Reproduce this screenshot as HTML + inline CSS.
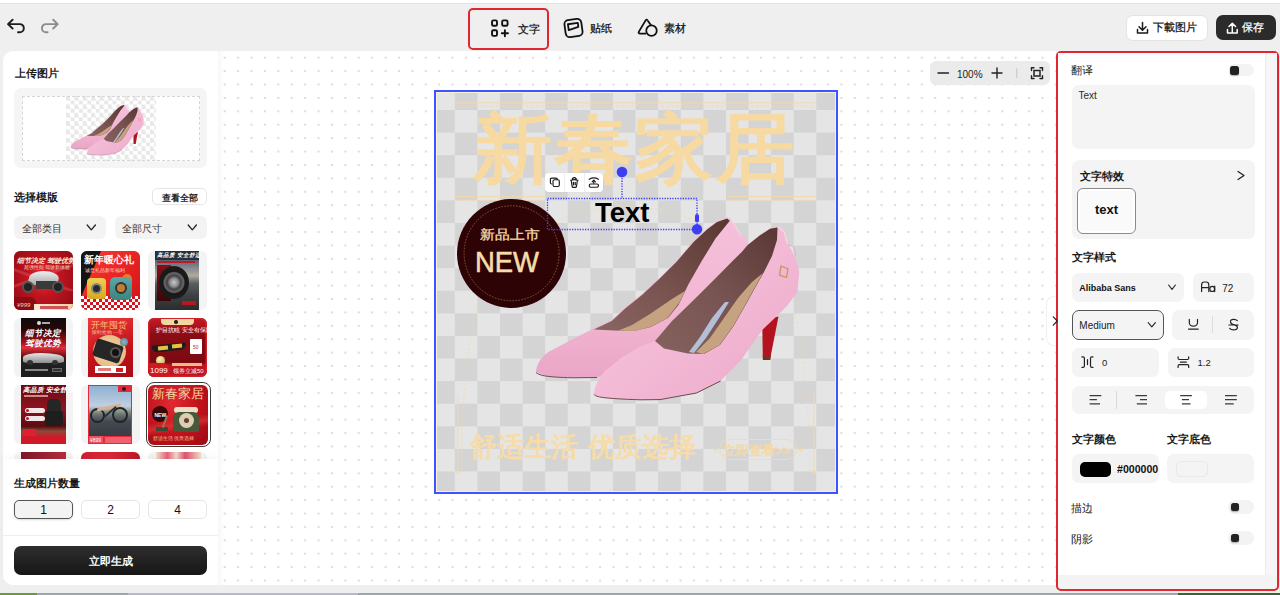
<!DOCTYPE html>
<html><head><meta charset="utf-8">
<style>
*{box-sizing:border-box;margin:0;padding:0}
html,body{width:1280px;height:595px;overflow:hidden;background:#efefef;font-family:"Liberation Sans",sans-serif;color:#222}
.a{position:absolute}
.t{position:absolute;white-space:nowrap;line-height:1}
svg{position:absolute;overflow:visible}
</style></head><body>
<!-- top strip -->
<div class="a" style="left:0;top:0;width:1280px;height:4px;background:#fff;border-bottom:1px solid #e4e4e4"></div>
<div class="a" style="left:0;top:5px;width:1280px;height:46px;background:#efefef"></div>

<!-- undo / redo -->
<svg style="left:0;top:0" width="80" height="50">
 <path d="M12.6 19.7 L8 24.1 L12.6 28.5 M8.4 24.1 H19.8 a4.05 4.05 0 0 1 0 8.1 H18" fill="none" stroke="#1e1e1e" stroke-width="1.9" stroke-linecap="round" stroke-linejoin="round"/>
 <path d="M53.2 19.7 L57.7 24.1 L53.2 28.5 M57.3 24.1 H46 a4.05 4.05 0 0 0 0 8.1 H47.6" fill="none" stroke="#8c8c8c" stroke-width="1.9" stroke-linecap="round" stroke-linejoin="round"/>
</svg>

<!-- center tools -->
<div class="a" style="left:468px;top:8px;width:81px;height:42px;border:2px solid #e0262f;border-radius:5px"></div>
<svg style="left:0;top:0" width="700" height="50">
 <g fill="none" stroke="#111" stroke-width="1.8" stroke-linejoin="round">
  <rect x="492.05" y="20.35" width="4.95" height="5.4" rx="1.3" stroke-width="1.9"/>
  <rect x="502.15" y="20.35" width="5.4" height="5.4" rx="1.3" stroke-width="1.9"/>
  <rect x="492.05" y="30.25" width="4.95" height="5.6" rx="1.3" stroke-width="1.9"/>
  <path d="M501.8 33.2 H508 M504.9 30.2 V36.3" stroke-linecap="round" stroke-width="1.9"/>
 </g>
 <g fill="none" stroke="#111" stroke-width="1.8" stroke-linejoin="round" transform="rotate(-8 573.5 28)">
  <rect x="565" y="19.5" width="17" height="17" rx="4"/>
  <path d="M568.5 23.5 L578.5 23.5 L578.5 27.5 L568.5 29.5 Z"/>
 </g>
 <g fill="none" stroke="#111" stroke-width="1.8" stroke-linejoin="round">
  <path d="M647.6 20.4 Q646.6 18.9 645.6 20.4 L638.9 31.6 Q637.9 33.6 640.2 33.6 L646 33.6" stroke-width="1.8"/>
  <path d="M647.6 20.4 L651.2 25.6" stroke-width="1.8"/>
  <circle cx="651.5" cy="30.7" r="5.25" fill="#efefef" stroke-width="1.8"/>
 </g>
</svg>
<div class="t" style="left:517.5px;top:24.0px;font-size:11px;color:#111;-webkit-text-stroke:0.25px #111">文字</div>
<div class="t" style="left:589.5px;top:23.0px;font-size:11px;color:#111;-webkit-text-stroke:0.25px #111">贴纸</div>
<div class="t" style="left:663.5px;top:23.0px;font-size:11px;color:#111;-webkit-text-stroke:0.25px #111">素材</div>

<!-- right buttons -->
<div class="a" style="left:1126px;top:15px;width:82px;height:26px;background:#fff;border:1px solid #e3e3e3;border-radius:7px"></div>
<svg style="left:0;top:0" width="1280" height="50">
 <path d="M1142.5 22.5 V30 M1139 26.8 L1142.5 30.3 L1146 26.8 M1137.5 29.5 V33 H1147.5 V29.5" fill="none" stroke="#1a1a1a" stroke-width="1.5" stroke-linecap="round" stroke-linejoin="round"/>
</svg>
<div class="t" style="left:1152.5px;top:22.0px;font-size:11px;color:#111;-webkit-text-stroke:0.25px #111">下載图片</div>
<div class="a" style="left:1216px;top:15px;width:60px;height:25px;background:#2b2b2b;border-radius:7px"></div>
<svg style="left:0;top:0" width="1280" height="50">
 <path d="M1232.3 32 V23.5 M1229 26.5 L1232.3 23.2 L1235.6 26.5 M1227.5 29.5 V33 H1237.2 V29.5" fill="none" stroke="#fff" stroke-width="1.5" stroke-linecap="round" stroke-linejoin="round"/>
</svg>
<div class="t" style="left:1242.0px;top:21.5px;font-size:11px;color:#fff;-webkit-text-stroke:0.25px #fff">保存</div>

<!-- LEFT PANEL -->
<div id="left" class="a" style="left:3px;top:51px;width:215px;height:534px;background:#fff;border-radius:10px 0 0 10px"></div>


<!-- LEFT PANEL CONTENT -->
<div class="t" style="left:14.5px;top:68.0px;font-size:11px;font-weight:bold;color:#1a1a1a">上传图片</div>
<div class="a" style="left:14px;top:88px;width:193px;height:80px;background:#f5f5f5;border-radius:7px"></div>
<div class="a" style="left:22px;top:96px;width:178px;height:65px;background:#fff"></div>
<div class="a" style="left:65.7px;top:96px;width:90px;height:64.6px;background-color:#fff;background-image:repeating-conic-gradient(#fff 0 25%,#e8e8e8 0 50%);background-size:8.4px 8.4px;background-position:0 0"></div>
<svg style="left:0;top:0" width="220" height="200"><use href="#shoeg" transform="translate(-77.7 44.4) scale(0.277)"/></svg>
<div class="a" style="left:22px;top:96px;width:178px;height:65px;border:1px dashed #d6d6d6"></div>
<div class="t" style="left:14.0px;top:192.0px;font-size:11px;font-weight:bold;color:#1a1a1a">选择模版</div>
<div class="a" style="left:152px;top:188px;width:55px;height:17px;background:#fff;border:1px solid #e6e6e6;border-radius:5px"></div>
<div class="t" style="left:162.0px;top:193.9px;font-size:9px;font-weight:bold;color:#222">查看全部</div>
<div class="a" style="left:14px;top:216px;width:92px;height:23px;background:#f3f3f3;border-radius:6px"></div>
<div class="t" style="left:21.5px;top:224.0px;font-size:10px;color:#333">全部类目</div>
<div class="a" style="left:115px;top:216px;width:92px;height:23px;background:#f3f3f3;border-radius:6px"></div>
<div class="t" style="left:121.7px;top:224.0px;font-size:10px;color:#333">全部尺寸</div>
<svg style="left:0;top:0" width="220" height="260"><path d="M87.2 225 L91.3 229.8 L95.4 225 M188.2 225 L192.3 229.8 L196.4 225" fill="none" stroke="#222" stroke-width="1.3" stroke-linecap="round" stroke-linejoin="round"/></svg>


<!-- TEMPLATE GRID -->
<div class="a" style="left:3px;top:245px;width:215px;height:220px;overflow:hidden">
 <!-- row1 -->
 <div class="a" style="left:11px;top:6px;width:59px;height:59px;border-radius:6px;overflow:hidden;background:radial-gradient(ellipse at 50% 45%,#e8303a 0%,#c01420 40%,#8a0a14 100%)">
  <div class="a" style="left:0;top:14px;width:59px;height:26px;background:linear-gradient(160deg,transparent 40%,rgba(255,120,120,.35) 45%,transparent 50%),linear-gradient(20deg,transparent 40%,rgba(255,120,120,.35) 45%,transparent 50%)"></div>
  <div class="t" style="left:3px;top:6px;font-size:7px;font-weight:bold;font-style:italic;color:#f8e6d8">细节决定 驾驶优势</div>
  <div class="t" style="left:10px;top:14px;font-size:5px;color:#f4d8b0">超强性能 驾驶新体验</div>
  <div class="a" style="left:15px;top:20px;width:30px;height:14px;border-radius:40% 60% 20% 30%;background:linear-gradient(#f0f0f0,#a8a8a8);transform:skewX(-15deg)"></div>
  <div class="a" style="left:22px;top:30px;width:20px;height:8px;background:#3a3a3a"></div>
  <div class="a" style="left:8px;top:30px;width:12px;height:12px;border-radius:50%;background:#222;border:2px solid #555"></div>
  <div class="a" style="left:38px;top:30px;width:12px;height:12px;border-radius:50%;background:#222;border:2px solid #555"></div>
  <div class="a" style="left:0;top:46px;width:22px;height:13px;background:#8c0a12;border-radius:0 6px 0 0"></div>
  <div class="t" style="left:3px;top:51px;font-size:6px;font-style:italic;color:#f0d0c0">¥999</div>
  <div class="a" style="left:20px;top:53px;width:39px;height:6px;background:linear-gradient(90deg,#f8e8d0,#f0d0a8)"></div>
  <div class="a" style="left:26px;top:54.5px;width:28px;height:3px;background:#c01828;opacity:.7"></div>
 </div>
 <div class="a" style="left:78px;top:6px;width:59px;height:59px;border-radius:6px;overflow:hidden;background:linear-gradient(135deg,#ff3a30,#d01018)">
  <div class="a" style="left:0;top:0;width:0;height:0;border-top:46px solid #151515;border-right:20px solid transparent"></div>
  <div class="t" style="left:3px;top:4px;font-size:10px;font-weight:bold;color:#fff">新年暖心礼</div>
  <div class="t" style="left:4px;top:17px;font-size:5px;color:#ffd8d0">诚意礼品新年福利</div>
  <div class="a" style="left:41px;top:23px;width:10px;height:10px;border-radius:50%;background:#f0a030;opacity:.7"></div>
  <div class="a" style="left:0;top:45px;width:59px;height:14px;background-color:#fff;background-image:repeating-conic-gradient(#d41520 0 25%,#fff 0 50%);background-size:6px 6px"></div>
  <div class="a" style="left:6px;top:27px;width:19px;height:21px;background:linear-gradient(#f0d050,#d8a820);border-radius:4px"></div>
  <div class="a" style="left:10px;top:32px;width:11px;height:11px;background:#2a2a2a;border:2px solid #888;border-radius:50%"></div>
  <div class="a" style="left:29px;top:26px;width:22px;height:23px;background:linear-gradient(#5aa8a4,#3c8480);border-radius:5px"></div>
  <div class="a" style="left:34px;top:31px;width:12px;height:12px;background:#c08030;border-radius:50%;border:2.5px solid #333"></div>
 </div>
 <div class="a" style="left:145px;top:6px;width:59px;height:59px;border-radius:6px;background:#f3f3f3;overflow:hidden">
  <div class="a" style="left:7px;top:0;width:44px;height:59px;background:linear-gradient(#2a3444 0%,#8a8e94 30%,#b0a89c 42%,#5a5e62 55%,#3e4044 75%,#2c2c2e 100%)">
   <div class="a" style="left:0;top:0;width:44px;height:9px;background:#24303e"></div>
   <div class="t" style="left:2px;top:2px;font-size:5.5px;font-weight:bold;font-style:italic;color:#fff">高品质 安全舒适</div>
   <div class="a" style="left:2px;top:10px;width:38px;height:1.5px;background:#c01828"></div>
   <div class="a" style="left:2px;top:14px;width:14px;height:36px;background:linear-gradient(#8a0c16,#3a0608)"></div>
   <div class="a" style="left:4px;top:15px;width:30px;height:33px;border-radius:50%;background:radial-gradient(circle,#c8c8c8 0%,#888 20%,#444 30%,#666 44%,#181818 50%,#222 100%)"></div>
   <div class="a" style="left:27px;top:50px;width:14px;height:4px;background:#b51820"></div>
  </div>
 </div>
 <!-- row2 -->
 <div class="a" style="left:11px;top:73px;width:59px;height:59px;border-radius:6px;background:#f3f3f3;overflow:hidden">
  <div class="a" style="left:7px;top:0;width:45px;height:59px;background:linear-gradient(#0c0c0c 0%,#2a0608 20%,#a8101a 42%,#e0303a 50%,#6a0a10 66%,#222 70%,#1c1c1c 100%)">
   <div class="a" style="left:16px;top:3px;width:4px;height:4px;border-radius:50%;background:#ddd"></div>
   <div class="a" style="left:21px;top:4px;width:8px;height:2px;background:#aaa"></div>
   <div class="t" style="left:4px;top:11px;font-size:8.5px;font-weight:bold;font-style:italic;color:#fff">细节决定</div>
   <div class="t" style="left:4px;top:21px;font-size:8.5px;font-weight:bold;font-style:italic;color:#fff">驾驶优势</div>
   <div class="a" style="left:2px;top:35px;width:41px;height:10px;border-radius:45% 55% 15% 15%;background:linear-gradient(#e8e8e8,#8c8c8c)"></div>
   <div class="a" style="left:6px;top:42px;width:6px;height:5px;border-radius:50%;background:#333"></div>
   <div class="a" style="left:31px;top:42px;width:6px;height:5px;border-radius:50%;background:#333"></div>
   <div class="a" style="left:4px;top:51px;width:23px;height:2px;background:#888"></div>
   <div class="a" style="left:31px;top:50px;width:10px;height:4px;background:#333;border:1px solid #666"></div>
  </div>
 </div>
 <div class="a" style="left:78px;top:73px;width:59px;height:59px;border-radius:6px;background:#f3f3f3;overflow:hidden">
  <div class="a" style="left:7px;top:0;width:45px;height:59px;background:linear-gradient(160deg,#f03a3a,#c0101a 60%,#a80c16)">
   <div class="t" style="left:3px;top:3px;font-size:9px;color:#f8c878">开年囤货</div>
   <div class="t" style="left:4px;top:13px;font-size:4.5px;color:#f8c0a0">限时抢购 一年</div>
   <div class="a" style="left:5px;top:17px;width:33px;height:33px;border-radius:50%;background:radial-gradient(circle,#f4d8a8,#e0b078)"></div>
   <div class="a" style="left:6px;top:24px;width:28px;height:18px;background:#262626;border-radius:3px;transform:rotate(18deg)"></div>
   <div class="a" style="left:22px;top:29px;width:11px;height:11px;background:#111;border:2px solid #555;border-radius:50%"></div>
   <div class="a" style="left:32px;top:20px;width:8px;height:8px;border-radius:50%;background:radial-gradient(circle,#9ad,#486)"></div>
   <div class="a" style="left:7px;top:48px;width:31px;height:7px;background:#fff"></div>
   <div class="a" style="left:10px;top:50px;width:13px;height:3px;background:#d02020;opacity:.6"></div>
   <div class="a" style="left:28px;top:49.5px;width:7px;height:4px;background:#d02020"></div>
  </div>
 </div>
 <div class="a" style="left:145px;top:73px;width:59px;height:59px;border-radius:6px;overflow:hidden;background:linear-gradient(#c81a24,#8a0c14 30%,#7a0a12 75%,#c01420 80%);box-shadow:inset 0 0 0 1.5px #d02028">
  <div class="a" style="left:13px;top:1px;width:33px;height:6px;background:#f0d8a0;border-radius:0 0 4px 4px"></div>
  <div class="a" style="left:26px;top:2px;width:3.5px;height:3.5px;border-radius:50%;background:#222"></div>
  <div class="t" style="left:8px;top:10px;font-size:5.5px;color:#fff">护目抗眩 安全有保障</div>
  <div class="a" style="left:4px;top:26px;width:34px;height:7px;background:#1c1c1c;border-radius:2px 2px 6px 6px;transform:rotate(-6deg)"></div>
  <div class="a" style="left:10px;top:28px;width:10px;height:4px;background:#e8c040;transform:rotate(-6deg)"></div>
  <div class="a" style="left:24px;top:26px;width:10px;height:4px;background:#e8c040;transform:rotate(-6deg)"></div>
  <div class="a" style="left:42px;top:21px;width:12px;height:15px;background:#fff;border-radius:1px"></div>
  <div class="t" style="left:45px;top:27px;font-size:5px;color:#c02020">50</div>
  <div class="a" style="left:8px;top:38px;width:9px;height:9px;border-radius:50%;background:radial-gradient(circle at 40% 35%,#fff0c0,#c89838)"></div>
  <div class="a" style="left:0;top:45px;width:22px;height:14px;background:#d01820;border-radius:0 8px 0 0"></div>
  <div class="t" style="left:2px;top:49px;font-size:8px;color:#fff">1099</div>
  <div class="a" style="left:24px;top:45px;width:30px;height:3px;background:#f0d090;opacity:.9"></div>
  <div class="t" style="left:25px;top:50px;font-size:6px;color:#fff">领券立减50</div>
 </div>
 <!-- row3 -->
 <div class="a" style="left:11px;top:140px;width:59px;height:59px;border-radius:6px;background:#f3f3f3;overflow:hidden">
  <div class="a" style="left:7px;top:0;width:45px;height:59px;background:linear-gradient(#6a0c14,#8c1420 40%,#5a0c12 70%,#8a4a3a 78%,#d01a28 88%,#c01420 100%)">
   <div class="t" style="left:2px;top:2px;font-size:6.5px;font-weight:bold;font-style:italic;color:#fff">高品质 安全舒适</div>
   <div class="a" style="left:3px;top:10px;width:24px;height:2px;background:#f0c0b0;opacity:.7"></div>
   <div class="a" style="left:4px;top:23px;width:20px;height:5px;background:#fff;border-radius:3px;opacity:.9"></div>
   <div class="a" style="left:4px;top:31px;width:20px;height:5px;background:#fff;border-radius:3px;opacity:.9"></div>
   <div class="a" style="left:5px;top:24px;width:3px;height:3px;background:#c01828;border-radius:50%"></div>
   <div class="a" style="left:5px;top:32px;width:3px;height:3px;background:#c01828;border-radius:50%"></div>
   <div class="a" style="left:26px;top:14px;width:14px;height:13px;background:#262626;border-radius:5px 5px 1px 1px"></div>
   <div class="a" style="left:24px;top:26px;width:18px;height:15px;background:#1e1e1e;border-radius:2px 2px 4px 4px"></div>
   <div class="a" style="left:2px;top:44px;width:13px;height:7px;background:#e02030"></div>
   <div class="a" style="left:0;top:53px;width:45px;height:6px;background:#d01828"></div>
  </div>
 </div>
 <div class="a" style="left:78px;top:140px;width:59px;height:59px;border-radius:6px;background:#f3f3f3;overflow:hidden">
  <div class="a" style="left:7px;top:0;width:44px;height:59px;background:#e8283a">
   <div class="a" style="left:1px;top:1px;width:42px;height:50px;background:linear-gradient(#8fb0d2 0%,#c0d0e0 40%,#8a9a8a 50%,#6a7070 58%,#454a50 70%,#383c42 100%)"></div>
   <div class="a" style="left:30px;top:1px;width:14px;height:6px;background:#e8283a"></div>
   <div class="a" style="left:34px;top:2px;width:4px;height:4px;background:#222;border-radius:50%"></div>
   <div class="a" style="left:2px;top:23px;width:15px;height:15px;border:2px solid #1e2428;border-radius:50%"></div>
   <div class="a" style="left:24px;top:22px;width:16px;height:16px;border:2px solid #1e2428;border-radius:50%"></div>
   <div class="a" style="left:9px;top:21px;width:24px;height:3px;background:#d8b090;transform:rotate(-12deg)"></div>
   <div class="a" style="left:14px;top:26px;width:16px;height:2px;background:#2a3036;transform:rotate(-40deg)"></div>
   <div class="a" style="left:1px;top:51px;width:14px;height:7px;background:#f05060"></div>
   <div class="t" style="left:2px;top:52.5px;font-size:5px;color:#fff">¥899</div>
   <div class="a" style="left:17px;top:52px;width:26px;height:6px;background:#f06070"></div>
  </div>
 </div>
 <div class="a" style="left:142.5px;top:137px;width:65px;height:65px;border-radius:8px;border:1.3px solid #3a3a3a;background:#fff"></div>
 <div class="a" style="left:145px;top:139.5px;width:60px;height:60px;border-radius:6px;overflow:hidden;background:radial-gradient(ellipse at 40% 30%,#e02a30,#c0121c 55%,#9a0a14)">
  <div class="a" style="left:0;top:30px;width:60px;height:20px;background:linear-gradient(170deg,transparent 30%,rgba(255,90,90,.35) 50%,transparent 70%)"></div>
  <div class="t" style="left:4px;top:3px;font-size:12.5px;color:#f5d8a8">新春家居</div>
  <div class="a" style="left:4px;top:21px;width:16px;height:16px;border-radius:50%;background:#3a0608"></div>
  <div class="t" style="left:6.5px;top:28px;font-size:5px;font-weight:bold;color:#fff">NEW</div>
  <div class="a" style="left:26px;top:22px;width:24px;height:6px;background:#ece0c8;border-radius:4px"></div>
  <div class="a" style="left:25px;top:27px;width:26px;height:20px;background:#485838;border-radius:6px 6px 2px 2px"></div>
  <div class="a" style="left:31px;top:28px;width:15px;height:15px;background:#dcd0b4;border-radius:50%"></div>
  <div class="a" style="left:36px;top:33px;width:5px;height:5px;background:#6a4030;border-radius:50%"></div>
  <div class="a" style="left:8px;top:42px;width:12px;height:4px;background:#3a4a34"></div>
  <div class="a" style="left:16px;top:30px;width:2px;height:13px;background:#a07050;transform:rotate(20deg)"></div>
  <div class="t" style="left:5px;top:51px;font-size:5px;color:#f2c890">舒适生活 优质选择</div>
 </div>
 <!-- row4 -->
 <div class="a" style="left:11px;top:207px;width:59px;height:59px;border-radius:6px;background:#f3f3f3;overflow:hidden"><div class="a" style="left:7px;top:0;width:45px;height:59px;background:linear-gradient(100deg,#7a1828,#a82838 60%,#c03040)"></div></div>
 <div class="a" style="left:78px;top:207px;width:59px;height:59px;border-radius:6px;overflow:hidden;background:radial-gradient(ellipse at 40% 30%,#e83040,#c01828 70%,#a01020)"></div>
 <div class="a" style="left:145px;top:207px;width:59px;height:59px;border-radius:6px;background:#f3f3f3;overflow:hidden"><div class="a" style="left:7.5px;top:0;width:45px;height:59px;background:linear-gradient(90deg,#f0e4cc 0%,#e8607a 25%,#f4d8c8 45%,#e05070 65%,#f0e0c8 100%)"></div></div>
</div>
<!-- bottom section of left panel -->
<div class="a" style="left:3px;top:459px;width:215px;height:126px;background:#fff;border-radius:0 0 0 10px;box-shadow:0 -3px 6px rgba(0,0,0,.03)"></div>
<div class="t" style="left:14.0px;top:478.0px;font-size:11px;font-weight:bold;color:#1a1a1a">生成图片数量</div>
<div class="a" style="left:14px;top:500px;width:59px;height:19px;background:#f3f3f3;border:1px solid #555;border-radius:5px;box-shadow:0 1px 2px rgba(0,0,0,.15)"></div>
<div class="a" style="left:81px;top:500px;width:59px;height:19px;background:#fff;border:1px solid #e6e6e6;border-radius:5px"></div>
<div class="a" style="left:148px;top:500px;width:59px;height:19px;background:#fff;border:1px solid #e6e6e6;border-radius:5px"></div>
<div class="t" style="left:40.3px;top:504.3px;font-size:12px;color:#111">1</div>
<div class="t" style="left:107.3px;top:504.3px;font-size:12px;color:#111">2</div>
<div class="t" style="left:174.3px;top:504.3px;font-size:12px;color:#111">4</div>
<div class="a" style="left:3px;top:535px;width:215px;height:1px;background:#efefef"></div>
<div class="a" style="left:14px;top:546px;width:193px;height:29px;background:linear-gradient(#2e2e2e,#161616);border-radius:7px"></div>
<div class="t" style="left:88.5px;top:555.5px;font-size:11px;font-weight:bold;color:#fff">立即生成</div>

<!-- CANVAS AREA -->
<div id="canvas" class="a" style="left:218px;top:51px;width:838px;height:534px;background-color:#fff;background-image:radial-gradient(circle,#dcdcdc 1.05px,transparent 1.55px);background-size:13.42px 13.42px;background-position:0 0"></div>


<!-- POSTER -->
<div class="a" style="left:434px;top:90px;width:404px;height:403.5px;border:2px solid #3d55ff;background:#f6f0dc"></div>
<div class="a" style="left:437px;top:93px;width:398px;height:397.5px;background-color:#e5e5e5;background-image:repeating-conic-gradient(#d4d4d4 0 25%,#e5e5e5 0 50%);background-size:45.2px 45.2px;background-position:-4.8px -5.6px"></div>
<svg style="left:0;top:0" width="1280" height="595">
 <g stroke="#f3d9a8" fill="none">
  <path d="M456 102.8 H815" stroke-width="1"/>
  <path d="M456 106 H815" stroke-width="1" stroke-dasharray="2.5 2.5"/>
  <path d="M456 196.6 H545 M727 196.6 H815" stroke-width="1"/>
  <path d="M456 200.6 H545 M727 200.6 H815" stroke-width="1" stroke-dasharray="2.5 2.5"/>
  <path d="M457.8 394 V472" stroke-width="1"/>
  <path d="M478 300 Q461 370 462 470" stroke-width="1" stroke-dasharray="1.5 3"/>
  <path d="M813.8 394 V474" stroke-width="1"/>
  <path d="M548 225 Q620 190 700 222" stroke-width="1" stroke-dasharray="2 3"/>
  <path d="M793 300 Q809 380 810 470" stroke-width="1" stroke-dasharray="1.5 3"/>
  <path d="M457.8 469.5 L459.2 472 L457.8 474.5 L456.4 472 Z" fill="#f6d8a0" stroke="none"/>
 </g>
</svg>
<div class="t" style="left:473px;top:111px;font-size:79.5px;letter-spacing:0.6px;color:#f7d9a2;-webkit-text-stroke:2.4px #f7d9a2;transform:scaleY(.955);transform-origin:0 0">新春家居</div>
<div class="t" style="left:470px;top:434px;font-size:26.5px;color:#f7dca8;word-spacing:2.4px;-webkit-text-stroke:0.9px #f7dca8">舒适生活 优质选择</div>
<div class="a" style="left:718.8px;top:438.7px;width:78.7px;height:21.8px;border:0.8px solid #f2dcb4;border-radius:11px"></div>
<div class="t" style="left:723px;top:444px;font-size:13px;color:#f7d9a2;-webkit-text-stroke:0.45px #f7d9a2">立即查看&gt;&gt;</div>
<svg style="left:0;top:0" width="1280" height="595"><path d="M715.5 446.5 L716.5 449 L719 449.5 L716.5 450 L715.5 452.5 L714.5 450 L712 449.5 L714.5 449 Z M800.5 446.5 L801.5 449 L804 449.5 L801.5 450 L800.5 452.5 L799.5 450 L797 449.5 L799.5 449 Z M814.6 469.5 L816 472 L814.6 474.5 L813.2 472 Z" fill="#f6d8a0"/></svg>

<!-- NEW badge -->
<div class="a" style="left:457px;top:199px;width:109px;height:109px;border-radius:50%;background:#2e0306"></div>
<svg style="left:0;top:0" width="1280" height="595"><circle cx="511.6" cy="253.3" r="47.5" fill="none" stroke="#9a6a48" stroke-width="0.8" stroke-dasharray="1.6 1.4"/></svg>
<div class="t" style="left:480px;top:228px;font-size:15px;color:#f6dca8;-webkit-text-stroke:0.35px #f6dca8;transform:scaleY(.88);transform-origin:0 0">新品上市</div>
<div class="t" style="left:475px;top:247px;font-size:29.5px;color:#f6dca8;-webkit-text-stroke:0.6px #f6dca8;transform:scaleX(.93);transform-origin:0 0">NEW</div>

<!-- SHOE -->
<svg style="left:0;top:0" width="1280" height="595">
 <defs>
  <linearGradient id="pk" x1="0" y1="0" x2="0" y2="1"><stop offset="0" stop-color="#f5c0da"/><stop offset=".55" stop-color="#f2b7d3"/><stop offset="1" stop-color="#eaa6c6"/></linearGradient>
  <linearGradient id="pk2" x1="0" y1="0" x2="1" y2="1"><stop offset="0" stop-color="#f6c6de"/><stop offset=".5" stop-color="#f3bad6"/><stop offset="1" stop-color="#eba8c8"/></linearGradient>
  <linearGradient id="br" x1="1" y1="0" x2="0" y2="1"><stop offset="0" stop-color="#5a3633"/><stop offset=".6" stop-color="#7a5552"/><stop offset="1" stop-color="#8a6663"/></linearGradient>
  <linearGradient id="br2" x1="1" y1="0" x2="0" y2="1"><stop offset="0" stop-color="#5a3634"/><stop offset=".5" stop-color="#775351"/><stop offset="1" stop-color="#86625f"/></linearGradient>
 </defs>
 <g id="shoeg">
 <!-- back shoe body -->
 <path d="M535.9 372 C536.5 363 543 355 550 351 L580.4 335.3 L593.8 328.6 L611.8 320 L625.2 307.4 L642 294 L660 277.3 L676.8 260.5 L693.6 241.1 L707 228.5 L717.1 221 L727.2 217.1 L730.6 218.4 L734.8 225.2 L740.7 235.3 L745.7 236.1 L747.4 245.3 L700 320 L640 362 L597 377.3 L572 377.6 L546.8 376.6 Z" fill="url(#pk)"/>
 <!-- back interior -->
 <path d="M593.8 329.6 L611.8 321 L625.2 308.4 L642 295 L660 278.3 L676.8 261.5 L693.6 242.1 L707 229.5 L717.1 222 L727.2 218.6 L730 220.5 L715.5 238.6 L702 260.5 L688.6 284 L678.5 305 L668 318 L651 326.9 L634.1 331.1 L614 330.6 Z" fill="url(#br)"/>
 <path d="M618 330.8 L634 331 L651 326.8 L667 318.5 L679 303 L685 291 L672 299 L650 314 L632 325 Z" fill="#c6a280"/>
 <path d="M536 372.5 C540 376 548 377 572 377.8 L597 377.5" stroke="#6b4a4f" stroke-width="1" fill="none"/>
 <!-- heel -->
 <path d="M762.3 326 L774 317.5 L778.5 316.5 L770.5 357 L762.8 357 L762.5 340 Z" fill="#b3131f"/>
 <path d="M762.8 355 L770.9 355 L770.4 360 L762.8 360 Z" fill="#7a3020"/>
 <!-- front shoe body -->
 <path d="M593.8 394 C595 385 600 376 605.6 370.5 L622.4 357.1 L639.2 347 L655 341 L672 321 L688.6 305 L700 293.7 L716.8 276.9 L733.6 260 L742 251.7 L747.4 245.3 L760 235.3 L770 228.5 L778 226 L784.1 231.9 L787.5 243.6 L791.6 250 L797.6 263.8 L799.2 271.8 L797.5 292 L787.4 305.5 L775.6 317.2 L762.2 330 L740.8 360.6 L720.6 380.8 L696.5 392.9 L660 399.5 L640 399.7 L605.6 398 L597 396.5 Z" fill="url(#pk2)"/>
 <!-- front interior -->
 <path d="M655 341 L672 321 L688.6 305 L700 293.7 L716.8 276.9 L733.6 260 L742 251.7 L747.4 245.3 L760 235.3 L770 228.8 L777.5 227.5 L777 240 L772 256 L764 272 L755 288 L745 306 L733 327 L720 345 L704 354 L688 353.5 L664 348.5 Z" fill="url(#br2)"/>
 <path d="M703 354 L719.5 345 L732.5 327 L744.5 306 L754.5 288 L763 273 L752 282 L738 298 L724 318 L710 338 L696 352 Z" fill="#c6a380"/>
 <path d="M694 353 L706 338 L719 318 L729 302 L725 302 L712 318 L700 337 L689 352 Z" fill="#b4bed6"/>
   <path d="M594 394.5 C596 397 603 398.5 640 399.8 L660 399.6 L696.5 393 L720.6 381" stroke="#6b4a4f" stroke-width="1" fill="none"/>
 <path d="M778 226.5 L784.1 232 L787.5 243.6" stroke="#fbd6e6" stroke-width="1.2" fill="none"/>
 <path d="M727.5 217.8 L734.8 225.2 L740.7 235.3" stroke="#fbd6e6" stroke-width="1" fill="none"/>
 <path d="M781 266 L788 269 L786.5 277.5 L779.5 275 Z" fill="none" stroke="#c9955a" stroke-width="1.3"/>
 <path d="M787.8 245 L793.2 246.3 L796 256" stroke="#e6a2c2" stroke-width=".8" fill="none"/>
 </g>
 
 
</svg>
<!-- selection -->
<div class="a" style="left:545.2px;top:172.9px;width:57.8px;height:19px;background:#fff;border-radius:4px;box-shadow:0 0 2px rgba(0,0,0,.06)"></div>
<div class="a" style="left:564px;top:172.9px;width:0.8px;height:19px;background:#efefef"></div>
<div class="a" style="left:583.5px;top:172.9px;width:0.8px;height:19px;background:#efefef"></div>
<svg style="left:0;top:0" width="1280" height="595">
 <g fill="none" stroke="#1a1a1a" stroke-width="1.15" stroke-linejoin="round" stroke-linecap="round">
  <path d="M551.5 184 A1.3 1.3 0 0 1 550.4 182.8 V179.4 A1.3 1.3 0 0 1 551.7 178.1 H556 A1.3 1.3 0 0 1 557.3 179.4"/>
  <rect x="553" y="179.7" width="6.3" height="6.8" rx="1.5"/>
  <path d="M570.5 180.2 Q574.3 179.2 578.2 180.2 M572.2 179.8 Q572.4 177.6 574.3 177.6 Q576.2 177.6 576.4 179.8 M571.3 180.8 L572.1 186.5 Q572.3 187.3 573.2 187.3 H575.4 Q576.3 187.3 576.5 186.5 L577.3 180.8"/>
  <path d="M573.4 182.3 V184.8 M575.2 182.3 V184.8" stroke-width="1.3"/>
  <path d="M589.2 179.3 Q593.8 176.6 598.4 179.3"/>
  <path d="M593.8 180.5 V183.2" stroke-width="1.2"/>
  <path d="M592.2 181.8 L593.8 180.2 L595.4 181.8" stroke-width="1.2"/>
  <rect x="589.2" y="184" width="9.3" height="3.2" rx="1.6"/>
 </g>
</svg>
<svg style="left:0;top:0" width="1280" height="595">
 <g stroke="#3d3df5" fill="none" stroke-width="1.3" stroke-dasharray="1.3 1.3">
  <path d="M547.5 198.5 H697 V229.5 H547.5 Z"/>
  <path d="M622 178 V198"/>
 </g>
 <circle cx="622" cy="172" r="5.3" fill="#3d3df5"/>
 <circle cx="697" cy="229.3" r="5.2" fill="#3d3df5"/>
 <rect x="695" y="214" width="4" height="8.5" rx="2" fill="#3d3df5"/>
</svg>
<div class="t" style="left:595px;top:199px;font-size:27.5px;font-weight:bold;color:#000">Text</div>

<!-- zoom pill -->
<div class="a" style="left:930px;top:61px;width:120px;height:24px;background:#ebebeb;border-radius:6px"></div>
<svg style="left:0;top:0" width="1280" height="595">
 <g stroke="#222" stroke-width="1.4" fill="none" stroke-linecap="round">
  <path d="M938 73 H948.5"/>
  <path d="M992 73 H1002 M997 68 V78"/>
  <path d="M1031.5 70.5 V67.8 H1034 M1040 67.8 H1042.5 V70.5 M1042.5 75.8 V78.5 H1040 M1034 78.5 H1031.5 V75.8"/>
  <rect x="1034" y="70.5" width="6" height="5.5" stroke-width="1.5"/>
 </g>
 <path d="M1016.8 68.5 V78" stroke="#c4c4c4" stroke-width="1"/>
</svg>
<div class="t" style="left:957.0px;top:69.8px;font-size:10px;color:#222">100%</div>

<div class="a" style="left:218px;top:51px;width:6px;height:534px;background:linear-gradient(90deg,rgba(0,0,0,.035),rgba(0,0,0,0))"></div>
<div class="a" style="left:1046px;top:296px;width:14px;height:50px;border:1px solid #f0f0f0;border-right:none;border-radius:8px 0 0 8px;background:#fff"></div>
<!-- RIGHT PANEL -->
<div id="right" class="a" style="left:1056px;top:51px;width:223px;height:540px;background:#f3f3f3;border:2px solid #e0262f;border-radius:5px"></div>


<div class="a" style="left:1058px;top:53px;width:207px;height:522px;background:#fff"></div>
<div class="a" style="left:1265px;top:53px;width:12px;height:522px;background:#f6f6f6;border-left:1px solid #ececec"></div>
<div class="t" style="left:1071.0px;top:65.0px;font-size:11px;color:#1a1a1a">翻译</div>
<div class="a" style="left:1229px;top:63.5px;width:25px;height:12.5px;background:#f3f3f3;border-radius:7px"></div>
<div class="a" style="left:1230px;top:66px;width:8.5px;height:8.5px;background:#222;border-radius:2.5px;box-shadow:0 1px 1.5px rgba(0,0,0,.3)"></div>
<div class="a" style="left:1071.5px;top:84.5px;width:183px;height:64px;background:#f4f4f4;border-radius:7px"></div>
<div class="t" style="left:1078.5px;top:90.8px;font-size:10px;color:#2a2a2a">Text</div>

<div class="a" style="left:1071.5px;top:160px;width:183px;height:78.5px;background:#f4f4f4;border-radius:7px"></div>
<div class="t" style="left:1079.5px;top:170.5px;font-size:11px;font-weight:bold;color:#1a1a1a">文字特效</div>
<svg style="left:0;top:0" width="1280" height="595"><path d="M1238 171.5 L1244 175.5 L1238 179.5" fill="none" stroke="#222" stroke-width="1.3" stroke-linecap="round" stroke-linejoin="round"/></svg>
<div class="a" style="left:1077px;top:188px;width:59px;height:45.5px;background:#fafafa;border:1px solid #8a8a8a;border-radius:6px;box-shadow:inset 0 0 0 2px #fff"></div>
<div class="t" style="left:1095px;top:203px;font-size:13px;font-weight:bold;color:#111">text</div>

<div class="t" style="left:1072.0px;top:251.5px;font-size:11px;font-weight:bold;color:#1a1a1a">文字样式</div>
<div class="a" style="left:1071.5px;top:272.5px;width:112px;height:29px;background:#f4f4f4;border-radius:7px"></div>
<div class="t" style="left:1079.2px;top:283.8px;font-size:9px;font-weight:bold;color:#111">Alibaba Sans</div>
<div class="a" style="left:1192.5px;top:272.5px;width:61.5px;height:29px;background:#f4f4f4;border-radius:7px"></div>
<div class="t" style="left:1222.3px;top:284.1px;font-size:10px;color:#222">72</div>
<div class="a" style="left:1071.5px;top:310px;width:92px;height:29.5px;background:#f4f4f4;border:1px solid #555;border-radius:7px"></div>
<div class="t" style="left:1079.3px;top:321.0px;font-size:10px;color:#222">Medium</div>
<div class="a" style="left:1172px;top:310px;width:82px;height:29.5px;background:#f4f4f4;border-radius:7px"></div>
<div class="a" style="left:1211.5px;top:316px;width:1px;height:17px;background:#dcdcdc"></div>
<div class="a" style="left:1071.5px;top:348px;width:87.5px;height:28.5px;background:#f4f4f4;border-radius:7px"></div>
<div class="t" style="left:1102px;top:358px;font-size:9.5px;color:#222">0</div>
<div class="a" style="left:1167.5px;top:348px;width:86.5px;height:28.5px;background:#f4f4f4;border-radius:7px"></div>
<div class="t" style="left:1197.5px;top:358px;font-size:9.5px;color:#222">1.2</div>
<div class="a" style="left:1071.5px;top:385.5px;width:182.5px;height:28.5px;background:#f4f4f4;border-radius:7px"></div>
<div class="a" style="left:1116.2px;top:391px;width:0.8px;height:17.5px;background:#d8d8d8"></div>
<div class="a" style="left:1165px;top:391px;width:41.5px;height:17.6px;background:#fff;border-radius:5px"></div>
<svg style="left:0;top:0" width="1280" height="595">
 <g fill="none" stroke="#222" stroke-width="1.3" stroke-linecap="round" stroke-linejoin="round">
  <path d="M1168.6 285 L1172 289.3 L1175.4 285" stroke-width="1.1"/>
  <path d="M1148.2 322.6 L1151.8 326.8 L1155.4 322.6" stroke-width="1.1"/>
  <path d="M1201.6 291.6 V284.8 Q1201.6 282 1204.4 282 H1206 Q1208.8 282 1208.8 284.8 V291.6 M1201.6 287.6 H1208.8" stroke-width="1.2"/><ellipse cx="1212.2" cy="288.9" rx="2.4" ry="2.6" stroke-width="1.2"/><path d="M1214.7 286.2 V291.6" stroke-width="1.2"/>
  <path d="M1189.3 319.4 V322.8 A4.1 3.4 0 0 0 1197.5 322.8 V319.4 M1188.6 329.2 H1198.2" stroke-width="1.2"/>
  <path d="M1237.3 320.6 Q1236 319.2 1233.5 319.3 Q1230.3 319.5 1230.5 321.9 Q1230.8 324 1233.6 324.6 Q1237.4 325.4 1237.4 327.4 Q1237.4 329.8 1233.6 329.8 Q1230.8 329.8 1229.7 328.3 M1228.9 325 H1238.1" stroke-width="1.2"/>
  <path d="M1081.9 356.9 H1083 Q1084.4 356.9 1084.4 358.3 V365.9 Q1084.4 367.3 1083 367.3 H1081.9 M1093 356.9 H1091.9 Q1090.5 356.9 1090.5 358.3 V365.9 Q1090.5 367.3 1091.9 367.3 H1093 M1087.5 359.6 V364.6" stroke-width="1.2"/>
  <path d="M1178.1 356.8 V358.3 Q1178.1 359.5 1179.3 359.5 H1187.5 Q1188.7 359.5 1188.7 358.3 V356.8 M1178.1 367.5 V366 Q1178.1 364.7 1179.3 364.7 H1187.5 Q1188.7 364.7 1188.7 366 V367.5 M1180.4 362.1 H1186.4" stroke-width="1.2"/>
  <path d="M1089.6 395.5 H1101.3 M1089.6 399.7 H1096.9 M1089.6 403.9 H1100" stroke-linecap="butt" stroke="#3a3a3a" stroke-width="1.25"/>
  <path d="M1135.4 395.5 H1147 M1140 399.7 H1147 M1136.8 403.9 H1147" stroke-linecap="butt" stroke="#3a3a3a" stroke-width="1.25"/>
  <path d="M1180.2 395.5 H1191.9 M1181.9 399.7 H1189 M1181.9 403.9 H1190.5" stroke-linecap="butt" stroke="#3a3a3a" stroke-width="1.25"/>
  <path d="M1225 395.5 H1236.8 M1225 399.7 H1236.8 M1225 403.9 H1233.7" stroke-linecap="butt" stroke="#3a3a3a" stroke-width="1.25"/>
 </g>
</svg>

<div class="t" style="left:1072.0px;top:433.5px;font-size:11px;font-weight:bold;color:#1a1a1a">文字颜色</div>
<div class="t" style="left:1167.0px;top:433.5px;font-size:11px;font-weight:bold;color:#1a1a1a">文字底色</div>
<div class="a" style="left:1071.5px;top:454px;width:87.5px;height:29px;background:#f4f4f4;border-radius:7px"></div>
<div class="a" style="left:1080px;top:461.5px;width:30.5px;height:15px;background:#000;border-radius:5px"></div>
<div class="t" style="left:1117px;top:464px;font-size:10.6px;font-weight:bold;color:#111">#000000</div>
<div class="a" style="left:1167px;top:454px;width:87px;height:29px;background:#f4f4f4;border-radius:7px"></div>
<div class="a" style="left:1175.5px;top:461px;width:32px;height:15.5px;background:#f4f4f4;border:1px solid #e8e8e8;border-radius:5px"></div>

<div class="t" style="left:1070.5px;top:503.0px;font-size:11px;color:#1a1a1a">描边</div>
<div class="a" style="left:1228px;top:500px;width:26px;height:14px;background:#f3f3f3;border-radius:7px"></div>
<div class="a" style="left:1230.5px;top:503px;width:8px;height:8px;background:#222;border-radius:2.5px;box-shadow:0 1px 1.5px rgba(0,0,0,.3)"></div>
<div class="t" style="left:1070.5px;top:533.5px;font-size:11px;color:#1a1a1a">阴影</div>
<div class="a" style="left:1228px;top:531px;width:26px;height:14px;background:#f3f3f3;border-radius:7px"></div>
<div class="a" style="left:1230.5px;top:534px;width:8px;height:8px;background:#222;border-radius:2.5px;box-shadow:0 1px 1.5px rgba(0,0,0,.3)"></div>

<svg style="left:0;top:0" width="1280" height="595"><path d="M1053.3 316.8 L1057.3 321 L1053.3 325.2" fill="none" stroke="#222" stroke-width="1.2" stroke-linecap="round"/></svg>
<!-- bottom taskbar strip -->
<div class="a" style="left:0;top:592.7px;width:1280px;height:2.3px;background:#a0a4ae"></div>
<div class="a" style="left:0;top:592.5px;width:37px;height:2.5px;background:#6a9a3a"></div>
<div class="a" style="left:128px;top:592.5px;width:230px;height:2.5px;background:#b8b8c8"></div>
<div class="a" style="left:1178px;top:592.5px;width:102px;height:2.5px;background:#2f6a2a"></div>
</body></html>
